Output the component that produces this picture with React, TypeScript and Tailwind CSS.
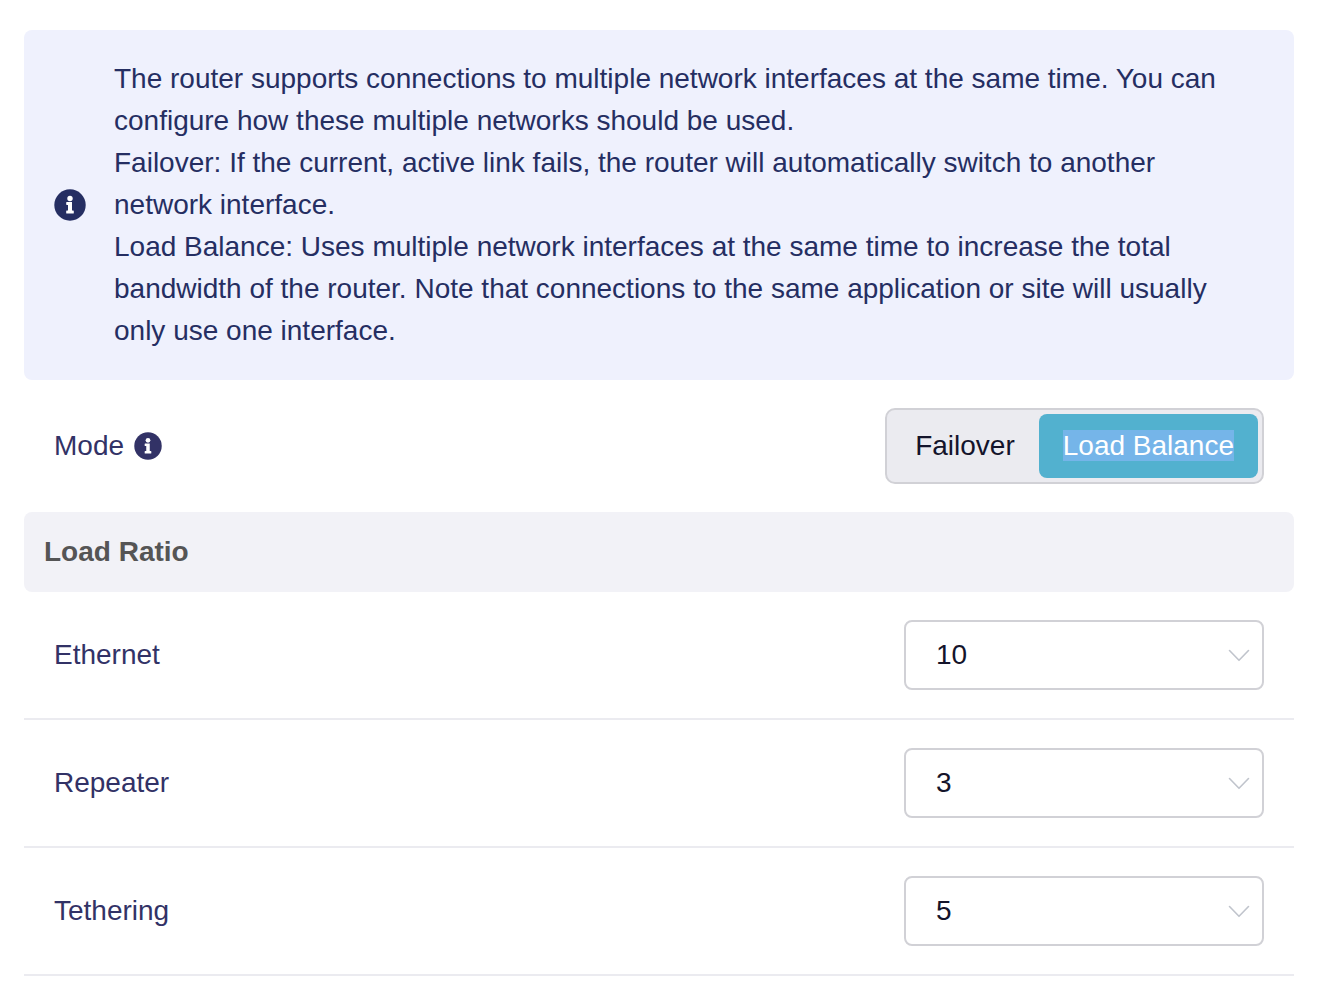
import React, { useState } from 'react';

const ratios = [
  { id: 'ethernet', label: 'Ethernet', value: 10 },
  { id: 'repeater', label: 'Repeater', value: 3 },
  { id: 'tethering', label: 'Tethering', value: 5 },
];

const options = [1, 2, 3, 4, 5, 6, 7, 8, 9, 10];

const InfoIcon: React.FC<{ className?: string }> = ({ className }) => (
  <svg viewBox="0 0 32 32" className={className} aria-hidden="true">
    <circle cx="16" cy="16" r="15.700" fill="currentColor" />
    <circle cx="16" cy="9.500" r="2.700" fill="#fff" />
    <path d="M12.800 13h5.200v8.600h1.200q.6 0 .6.600v1.700q0 .6-.6.600h-6.400q-.6 0-.6-.6v-1.700q0-.6.600-.6h1.200v-5.700h-1.200q-.6 0-.6-.6v-1.700q0-.6.600-.6z" fill="#fff" />
  </svg>
);

const App: React.FC = () => {
  const [mode, setMode] = useState('balance');

  return (
    <main className="bg-white pl-6 pr-9 pt-[30px] font-['Liberation_Sans',Arial,sans-serif] text-[28px] leading-[42px] text-[#323266]">
      {/* Explanation */}
      <section className="flex items-center gap-7 rounded-lg bg-[#eff1fd] py-7 pl-[30px] pr-12 text-[#252e62]">
        <InfoIcon className="size-8 shrink-0" />
        <div>
          <p>
            The router supports connections to multiple network interfaces at the same time. You can configure how these multiple networks should be used.
          </p>
          <p>
            Failover: If the current, active link fails, the router will automatically switch to another network interface.
          </p>
          <p>
            Load Balance: Uses multiple network interfaces at the same time to increase the total bandwidth of the router. Note that connections to the same application or site will usually only use one interface.
          </p>
        </div>
      </section>

      {/* Mode switch */}
      <section className="flex items-center justify-between px-[30px] py-7">
        <div className="flex items-center gap-2.5">
          <span id="mode-label">Mode</span>
          <InfoIcon className="size-7" />
        </div>
        <div role="group" aria-labelledby="mode-label" className="flex rounded-[10px] border-2 border-[#d1d1d6] bg-[#ebebf0] p-1">
          <button
            type="button"
            aria-pressed={mode === 'failover'}
            onClick={() => setMode('failover')}
            className="h-16 rounded-lg px-6 text-[#14142b] aria-pressed:bg-[#52b1cf] aria-pressed:text-white"
          >
            Failover
          </button>
          <button
            type="button"
            aria-pressed={mode === 'balance'}
            onClick={() => setMode('balance')}
            className="h-16 rounded-lg px-6 text-[#14142b] aria-pressed:bg-[#52b1cf] aria-pressed:text-white"
          >
            <span className="bg-[#75b5e9]">Load Balance</span>
          </button>
        </div>
      </section>

      {/* Load ratio */}
      <section>
        <h2 className="flex h-20 items-center rounded-lg bg-[#f2f2f7] px-5 font-bold text-[#555555]">Load Ratio</h2>
        {ratios.map((ratio) => (
          <div key={ratio.id} className="flex items-center justify-between border-b-2 border-[#ebebf0] px-[30px] py-7">
            <label htmlFor={ratio.id}>{ratio.label}</label>
            <div className="relative">
              <select
                id={ratio.id}
                defaultValue={ratio.value}
                className="h-[70px] w-[360px] appearance-none rounded-lg border-2 border-[#d1d1d6] bg-white px-[30px] text-[#14142b]"
              >
                {options.map((n) => (
                  <option key={n} value={n}>{n}</option>
                ))}
              </select>
              <svg viewBox="0 0 22 13" className="pointer-events-none absolute right-3.5 top-[29px] h-[13px] w-[22px]" fill="none" stroke="#c0c4cc" strokeWidth="1.600" strokeLinecap="round" strokeLinejoin="round" aria-hidden="true">
                <path d="M1.500 1.500l9.500 9.800 9.500-9.800" />
              </svg>
            </div>
          </div>
        ))}
      </section>
    </main>
  );
};

export default App;
